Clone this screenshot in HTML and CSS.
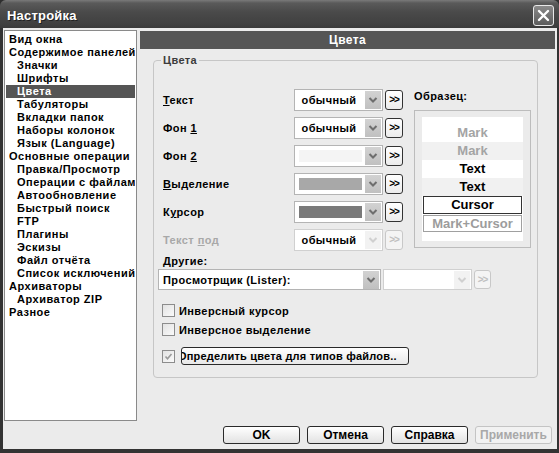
FILE: index.html
```html
<!DOCTYPE html>
<html lang="ru">
<head>
<meta charset="utf-8">
<title>Настройка</title>
<link rel="stylesheet" href="styles.css">
</head>
<body>
<div class="window">
  <div class="titlebar">
    <span class="title">Настройка</span>
    <div class="close"><svg width="13" height="13" viewBox="0 0 13 13"><path d="M2 2 L11 11 M11 2 L2 11" stroke="#fff" stroke-width="2.4" stroke-linecap="round"/></svg></div>
  </div>
  <div class="body">
    <div class="main">
      <div class="tree">
        <div class="item">Вид окна</div>
        <div class="item">Содержимое панелей</div>
        <div class="item sub">Значки</div>
        <div class="item sub">Шрифты</div>
        <div class="item sub selected">Цвета</div>
        <div class="item sub">Табуляторы</div>
        <div class="item sub">Вкладки папок</div>
        <div class="item sub">Наборы колонок</div>
        <div class="item sub">Язык (Language)</div>
        <div class="item">Основные операции</div>
        <div class="item sub">Правка/Просмотр</div>
        <div class="item sub">Операции с файлами</div>
        <div class="item sub">Автообновление</div>
        <div class="item sub">Быстрый поиск</div>
        <div class="item sub">FTP</div>
        <div class="item sub">Плагины</div>
        <div class="item sub">Эскизы</div>
        <div class="item sub">Файл отчёта</div>
        <div class="item sub">Список исключений</div>
        <div class="item">Архиваторы</div>
        <div class="item sub">Архиватор ZIP</div>
        <div class="item">Разное</div>
      </div>
      <div class="page">
        <div class="page-head">Цвета</div>
        <div class="group">
          <span class="legend">Цвета</span>
          <div class="cols">
            <div class="rows">
              <div class="row">
                <span class="label"><u>Т</u>екст</span>
                <div class="combo"><span class="val">обычный</span><span class="arrow"><svg width="10" height="8" viewBox="0 0 10 8"><polyline points="1.5,2 5,5.5 8.5,2" fill="none" stroke="#6e6e6e" stroke-width="2"/></svg></span></div>
                <div class="more">&gt;&gt;</div>
              </div>
              <div class="row">
                <span class="label">Фон <u>1</u></span>
                <div class="combo"><span class="val">обычный</span><span class="arrow"><svg width="10" height="8" viewBox="0 0 10 8"><polyline points="1.5,2 5,5.5 8.5,2" fill="none" stroke="#6e6e6e" stroke-width="2"/></svg></span></div>
                <div class="more">&gt;&gt;</div>
              </div>
              <div class="row">
                <span class="label">Фон <u>2</u></span>
                <div class="combo"><span class="swatch sw-light"></span><span class="arrow"><svg width="10" height="8" viewBox="0 0 10 8"><polyline points="1.5,2 5,5.5 8.5,2" fill="none" stroke="#6e6e6e" stroke-width="2"/></svg></span></div>
                <div class="more">&gt;&gt;</div>
              </div>
              <div class="row">
                <span class="label"><u>В</u>ыделение</span>
                <div class="combo"><span class="swatch sw-mid"></span><span class="arrow"><svg width="10" height="8" viewBox="0 0 10 8"><polyline points="1.5,2 5,5.5 8.5,2" fill="none" stroke="#6e6e6e" stroke-width="2"/></svg></span></div>
                <div class="more">&gt;&gt;</div>
              </div>
              <div class="row">
                <span class="label">К<u>у</u>рсор</span>
                <div class="combo"><span class="swatch sw-dark"></span><span class="arrow"><svg width="10" height="8" viewBox="0 0 10 8"><polyline points="1.5,2 5,5.5 8.5,2" fill="none" stroke="#6e6e6e" stroke-width="2"/></svg></span></div>
                <div class="more">&gt;&gt;</div>
              </div>
              <div class="row">
                <span class="label dim">Текст <u>п</u>од</span>
                <div class="combo disabled"><span class="val">обычный</span><span class="arrow"><svg width="10" height="8" viewBox="0 0 10 8"><polyline points="1.5,2 5,5.5 8.5,2" fill="none" stroke="#d0d0d0" stroke-width="2"/></svg></span></div>
                <div class="more disabled">&gt;&gt;</div>
              </div>
            </div>
            <div class="sample">
              <div class="sample-label">Образец:</div>
              <div class="sample-frame">
                <div class="sample-box">
                  <div class="s-row mark">Mark</div>
                  <div class="s-row mark alt">Mark</div>
                  <div class="s-row">Text</div>
                  <div class="s-row alt">Text</div>
                  <div class="s-row cursor">Cursor</div>
                  <div class="s-row markcursor">Mark+Cursor</div>
                </div>
              </div>
            </div>
          </div>
          <div class="others-label"><u>Д</u>ругие:</div>
          <div class="others">
            <div class="combo wide"><span class="val">Просмотрщик (Lister):</span><span class="arrow"><svg width="10" height="8" viewBox="0 0 10 8"><polyline points="1.5,2 5,5.5 8.5,2" fill="none" stroke="#6e6e6e" stroke-width="2"/></svg></span></div>
            <div class="combo disabled"><span class="val"></span><span class="arrow"><svg width="10" height="8" viewBox="0 0 10 8"><polyline points="1.5,2 5,5.5 8.5,2" fill="none" stroke="#d0d0d0" stroke-width="2"/></svg></span></div>
            <div class="more disabled">&gt;&gt;</div>
          </div>
          <div class="checks">
            <div class="check"><span class="box"></span><span>Инверсный курсор</span></div>
            <div class="check"><span class="box"></span><span>Инверсное выделение</span></div>
            <div class="check third"><span class="box"><svg width="9" height="9" viewBox="0 0 9 9"><polyline points="1.5,4.5 3.5,6.8 7.5,2" fill="none" stroke="#9a9a9a" stroke-width="1.6"/></svg></span><div class="btn-file"><span class="btn-file-text">Определить цвета для типов файлов..</span></div></div>
          </div>
        </div>
      </div>
    </div>
    <div class="footer">
      <div class="btn">OK</div>
      <div class="btn">Отмена</div>
      <div class="btn">Справка</div>
      <div class="btn disabled">Применить</div>
    </div>
  </div>
</div>
</body>
</html>
```

FILE: styles.css
```css
* { box-sizing: border-box; }
html, body { margin: 0; padding: 0; }
body {
  width: 559px;
  height: 453px;
  overflow: hidden;
  background: #2e2e2e;
  font-family: "Liberation Sans", Arial, sans-serif;
  font-weight: bold;
  font-size: 11px;
  letter-spacing: 0.4px;
  color: #000;
}
.window {
  width: 559px;
  height: 453px;
  display: flex;
  flex-direction: column;
  background: #333;
  border-radius: 6px 6px 0 0;
  overflow: hidden;
}
.titlebar {
  height: 28px;
  flex: none;
  display: flex;
  align-items: center;
  justify-content: space-between;
  padding: 0 5px 0 7px;
  background: linear-gradient(#7a7a7a 0, #5a5a5a 3px, #4a4a4a 12px, #404040 24px, #3a3a3a 28px);
}
.title {
  color: #fff;
  font-size: 13px;
  font-weight: bold;
  letter-spacing: 0.2px;
  text-shadow: 1px 1px 0 #222;
  margin-top: 3px;
}
.close {
  width: 21px;
  height: 21px;
  margin-top: 3px;
  border: 1px solid #e8e8e8;
  border-radius: 3px;
  background: linear-gradient(#8a8a8a, #5c5c5c);
  display: flex;
  align-items: center;
  justify-content: center;
}
.body {
  flex: 1;
  margin: 0 2px 4px 3px;
  background: #ebebeb;
  display: flex;
  flex-direction: column;
}
.main {
  display: flex;
  padding: 2px 2px 0 1px;
  gap: 3px;
}
.tree {
  width: 133px;
  height: 391px;
  flex: none;
  background: #fff;
  border: 1px solid #8a8a8a;
  padding: 2px 0 0 0;
  overflow: hidden;
}
.item {
  height: 13px;
  line-height: 13px;
  margin: 0 1px;
  padding-left: 3px;
  white-space: nowrap;
  overflow: hidden;
  letter-spacing: 0.5px;
}
.item.sub { padding-left: 11px; }
.item.selected { background: #555; color: #fff; }
.page {
  flex: 1;
  margin-top: 1px;
  display: flex;
  flex-direction: column;
}
.page-head {
  height: 18px;
  background: #555;
  color: #fff;
  font-size: 12px;
  line-height: 18px;
  text-align: center;
}
.group {
  position: relative;
  margin: 11px 17px 0 13px;
  height: 318px;
  border: 1px solid #c6c6c6;
  border-radius: 4px;
}
.legend {
  position: absolute;
  left: 7px;
  top: -7px;
  padding: 0 2px;
  background: #ebebeb;
  color: #3c3c3c;
  line-height: 13px;
}
.cols {
  display: flex;
  padding-top: 28px;
}
.rows {
  width: 241px;
  margin-left: 9px;
  display: flex;
  flex-direction: column;
  gap: 6px;
}
.row {
  display: flex;
  align-items: center;
  height: 22px;
}
.label { width: 131px; }
.label.dim { color: #a8a8a8; }
.combo {
  width: 89px;
  height: 22px;
  background: #fff;
  border: 1px solid #b4b4b4;
  display: flex;
  align-items: center;
  padding: 1px;
  flex: none;
}
.combo .val {
  flex: 1;
  text-align: center;
  padding-right: 3px;
  white-space: nowrap;
  overflow: hidden;
}
.combo .arrow {
  width: 16px;
  height: 18px;
  background: linear-gradient(#d2d2d2, #c0c0c0);
  display: flex;
  align-items: center;
  justify-content: center;
  flex: none;
}
.combo.disabled .arrow { background: #f2f2f2; }
.combo.disabled { border-color: #d0d0d0; }
.swatch {
  flex: 1;
  height: 12px;
  margin: 0 3px 0 3px;
}
.sw-light { background: #f4f4f4; }
.sw-mid { background: #a8a8a8; }
.sw-dark { background: #7a7a7a; }
.more {
  width: 18px;
  height: 20px;
  margin-left: 2px;
  border: 1px solid #333;
  border-radius: 3px;
  background: linear-gradient(#fff, #ececec);
  font-size: 10px;
  line-height: 18px;
  text-align: center;
  letter-spacing: -1px;
  flex: none;
}
.more.disabled { border-color: #c8c8c8; color: #c0c0c0; background: #f4f4f4; }
.sample {
  margin-left: 10px;
  width: 117px;
}
.sample-label {
  height: 14px;
  line-height: 14px;
}
.sample-frame {
  margin-top: 7px;
  width: 117px;
  height: 138px;
  border: 1px solid #bcbcbc;
  padding: 6px 0 0 7px;
}
.sample-box {
  width: 101px;
  height: 124px;
  background: #fff;
  padding-top: 7px;
  font-weight: bold;
  font-size: 13px;
  letter-spacing: 0;
}
.s-row {
  height: 18px;
  line-height: 18px;
  text-align: center;
  color: #000;
}
.s-row.alt { background: #f1f1f1; }
.s-row.mark { color: #a4a4a4; }
.s-row.cursor { border: 1px solid #333; margin: 0 1px; line-height: 16px; }
.s-row.markcursor { border: 1px solid #a0a0a0; margin: 1px 1px 0; height: 17px; line-height: 15px; color: #9c9c9c; }
.others-label {
  margin: 4px 0 0 9px;
  height: 13px;
  line-height: 13px;
}
.others {
  margin: 1px 0 0 4px;
  display: flex;
  align-items: center;
  gap: 2px;
}
.others .combo { height: 21px; }
.others .combo.wide { width: 223px; }
.others .combo.wide .val { text-align: left; padding-left: 3px; }
.others .more { margin-left: 0; width: 17px; height: 19px; line-height: 17px; }
.checks {
  margin: 14px 0 0 8px;
  display: flex;
  flex-direction: column;
}
.check {
  display: flex;
  align-items: center;
  height: 13px;
  gap: 4px;
}
.check + .check { margin-top: 6px; }
.check.third { height: 18px; margin-top: 11px; gap: 6px; }
.box {
  width: 13px;
  height: 13px;
  border: 1px solid #8c8c8c;
  background: linear-gradient(135deg, #e2e2e2, #fafafa);
  display: flex;
  align-items: center;
  justify-content: center;
  flex: none;
}
.btn-file {
  width: 228px;
  height: 18px;
  border: 1px solid #2a2a2a;
  border-radius: 3px;
  background: linear-gradient(#fff, #e8e8e8);
  overflow: hidden;
  white-space: nowrap;
  line-height: 16px;
  letter-spacing: 0.2px;
}
.btn-file-text { display: inline-block; margin-left: -4px; }
.footer {
  margin-top: 5px;
  padding-right: 5px;
  display: flex;
  justify-content: flex-end;
  gap: 7px;
}
.btn {
  width: 77px;
  height: 18px;
  border: 1px solid #2a2a2a;
  border-radius: 3px;
  background: linear-gradient(#fff, #e2e2e2);
  font-size: 12px;
  letter-spacing: 0;
  line-height: 16px;
  text-align: center;
}
.btn.disabled { color: #a8a8a8; border-color: #c4c4c4; background: #f2f2f2; }
```
